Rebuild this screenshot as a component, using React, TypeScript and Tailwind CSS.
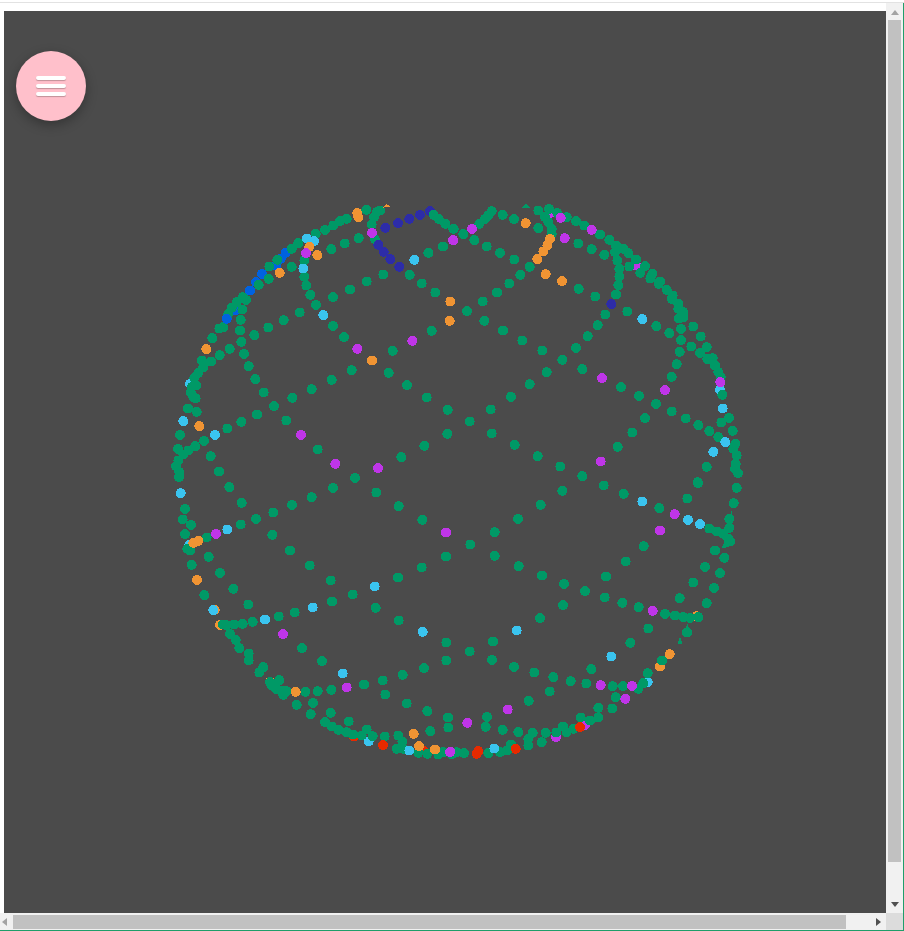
type Dot = [number, number, string?];

const fills: Record<string, string> = {
  g: "fill-[#009966]",
  o: "fill-[#f09433]",
  p: "fill-[#bf35e8]",
  c: "fill-[#3ac4ef]",
  n: "fill-[#2d2ca8]",
  b: "fill-[#0062e0]",
  r: "fill-[#e62a00]",
};

// sphere points, per quadrant, in 3x pixels from the quadrant origin
const quadrants: { ox: number; oy: number; under: Dot[]; green: Dot[]; over: Dot[] }[] = [
  {
    ox: 170,
    oy: 200,
    under: [
      [347, 157, "b"], [332, 175, "b"], [318, 195, "b"], [276, 220, "b"], [258, 245, "b"], [195, 330, "b"],
      [60, 550, "c"], [780, 32, "n"], [40, 662, "c"],
    ],
    green: [
      [589, 28], [620, 35], [630, 30], [605, 72], [612, 50], [490, 75], [510, 62], [530, 55], [465, 88], [437, 100],
      [385, 128], [365, 145], [322, 178], [298, 198], [266, 253], [296, 235], [365, 199], [403, 180], [403, 229],
      [409, 255], [421, 283], [438, 313], [489, 376], [522, 410], [484, 146], [524, 129], [566, 113], [614, 115],
      [590, 243], [640, 222], [540, 267], [489, 290], [389, 336], [341, 359], [295, 381], [253, 404], [214, 424],
      [222, 460], [236, 497], [256, 536], [281, 576], [312, 617], [349, 660], [179, 445], [149, 464], [123, 483],
      [95, 480], [100, 500], [85, 517], [73, 532], [78, 555], [65, 560], [62, 575], [70, 590], [77, 594], [54, 624],
      [80, 634], [30, 703], [102, 721], [76, 737], [55, 750], [40, 762], [24, 745], [25, 780], [18, 797], [28, 815],
      [27, 830], [122, 767], [147, 813], [172, 684], [214, 664], [261, 642], [367, 592], [425, 566], [485, 538],
      [545, 509], [668, 451], [785, 391], [819, 138], [775, 157], [719, 223], [755, 249], [796, 276], [791, 43],
      [806, 55], [826, 70], [851, 85], [656, 517], [711, 554], [770, 591], [833, 628], [832, 700], [763, 736],
      [694, 770], [443, 747], [555, 832], [127, 413], [148, 384], [160, 380], [175, 340], [185, 322], [200, 305],
      [218, 290], [228, 298], [217, 327], [212, 358], [210, 390],
    ],
    over: [
      [240, 270, "b"], [170, 355, "b"],
      [460, 344, "c"], [733, 178, "c"], [400, 204, "c"], [410, 114, "c"], [432, 122, "c"], [135, 703, "c"],
      [562, 38, "o"], [565, 50, "o"], [418, 139, "o"], [442, 164, "o"], [329, 217, "o"], [109, 446, "o"], [88, 677, "o"],
      [841, 303, "o"], [839, 361, "o"], [606, 480, "o"],
      [606, 97, "p"], [408, 158, "p"], [562, 445, "p"], [727, 421, "p"], [849, 119, "p"], [393, 703, "p"],
      [496, 790, "p"], [624, 803, "p"],
      [646, 82, "n"], [684, 68, "n"], [718, 55, "n"], [750, 43, "n"], [625, 133, "n"], [641, 154, "n"], [661, 176, "n"],
      [688, 199, "n"],
    ],
  },
  {
    ox: 450,
    oy: 200,
    under: [[300, 38, "p"], [558, 195, "p"], [810, 568, "c"]],
    green: [
      [125, 32], [115, 45], [105, 55], [88, 70], [158, 43], [192, 56], [265, 83], [40, 101], [73, 119], [10, 85],
      [110, 138], [150, 157], [193, 177], [239, 199], [211, 223], [178, 249], [141, 276], [98, 303], [51, 332],
      [103, 361], [159, 390], [217, 420], [277, 450], [337, 478], [378, 442], [413, 407], [443, 374], [466, 342],
      [498, 282], [505, 254], [508, 228], [508, 205], [502, 180], [495, 155], [463, 163], [425, 146], [385, 129],
      [265, 30], [297, 25], [285, 50], [295, 65], [305, 85], [305, 100], [322, 38], [350, 50], [378, 62], [403, 75],
      [450, 102], [478, 118], [498, 135], [520, 145], [535, 158], [558, 177], [585, 197], [538, 198], [571, 217],
      [607, 220], [601, 234], [630, 243], [626, 250], [650, 268], [668, 285], [665, 295], [685, 310], [685, 325],
      [700, 335], [700, 350], [687, 354], [693, 385], [693, 419], [689, 454], [680, 491], [665, 529], [730, 378],
      [752, 408], [770, 440], [724, 438], [750, 457], [788, 473], [772, 476], [795, 495], [805, 515], [812, 530],
      [817, 583], [532, 333], [619, 377], [658, 398], [436, 288], [386, 265], [290, 515], [397, 506], [239, 551],
      [183, 589], [122, 627], [59, 663], [125, 699], [194, 733], [263, 767], [331, 798], [397, 827], [513, 560],
      [567, 586], [618, 610], [585, 653], [547, 696], [503, 739], [665, 633], [707, 654], [745, 674], [778, 692],
      [805, 710], [814, 666], [837, 652], [848, 691], [856, 730], [850, 745], [860, 765], [857, 790], [855, 805],
      [864, 818], [770, 799], [743, 845],
    ],
    over: [
      [10, 119, "p"], [66, 85, "p"], [344, 113, "p"], [332, 52, "p"], [425, 88, "p"], [811, 545, "p"], [645, 569, "p"],
      [456, 533, "p"], [452, 783, "p"],
      [227, 68, "o"], [300, 115, "o"], [292, 135, "o"], [280, 153, "o"], [262, 176, "o"], [287, 221, "o"], [336, 242, "o"],
      [577, 356, "c"], [818, 624, "c"], [826, 725, "c"], [790, 754, "c"],
      [484, 311, "n"],
    ],
  },
  {
    ox: 170,
    oy: 480,
    under: [
      [150, 433, "o"], [134, 388, "o"], [300, 604, "o"], [552, 768, "r"], [596, 783, "c"], [760, 810, "r"], [58, 193, "c"],
    ],
    green: [
      [178, 20], [215, 67], [45, 85], [38, 117], [63, 133], [45, 161], [110, 171], [212, 132], [258, 115], [310, 96],
      [366, 73], [425, 50], [489, 22], [619, 36], [686, 77], [757, 118], [828, 228], [755, 261], [684, 291], [307, 163],
      [360, 210], [419, 255], [482, 300], [116, 229], [65, 253], [150, 277], [190, 325], [103, 344], [235, 372], [52, 205],
      [60, 210], [548, 342], [486, 363], [374, 396], [326, 408], [248, 424], [218, 430], [193, 432], [170, 434], [158, 432],
      [180, 460], [197, 478], [208, 503], [236, 519], [236, 540], [280, 560], [268, 576], [328, 599], [300, 605], [305, 615],
      [318, 625], [335, 630], [350, 632], [340, 643], [406, 634], [443, 632], [484, 628], [582, 612], [638, 600], [698, 583],
      [762, 563], [829, 540], [829, 486], [617, 382], [686, 420], [396, 503], [456, 542], [646, 642], [710, 669], [772, 692],
      [834, 711], [835, 741], [781, 752], [429, 667], [380, 673], [422, 701], [482, 697], [536, 723], [465, 725], [485, 738],
      [505, 748], [530, 755], [550, 762], [575, 765], [590, 747], [608, 767], [644, 768], [685, 765], [697, 783], [680, 805],
      [700, 805], [745, 817], [772, 820], [805, 822], [845, 822], [820, 815],
    ],
    over: [
      [32, 38, "c"], [172, 147, "c"], [130, 389, "c"], [285, 417, "c"], [428, 381, "c"], [614, 318, "c"], [758, 454, "c"],
      [518, 579, "c"], [718, 810, "c"],
      [138, 160, "p"], [339, 461, "p"], [530, 621, "p"], [828, 156, "p"], [841, 814, "p"],
      [85, 181, "o"], [70, 187, "o"], [81, 298, "o"], [377, 634, "o"], [731, 760, "o"], [747, 797, "o"], [795, 807, "o"],
      [639, 794, "r"],
    ],
  },
  {
    ox: 450,
    oy: 480,
    under: [
      [630, 558, "o"], [740, 407, "o"], [593, 605, "c"], [318, 770, "p"], [405, 733, "p"],
    ],
    green: [
      [337, 31], [461, 15], [521, 40], [628, 83], [712, 54], [744, 8], [860, 22], [851, 68], [838, 115], [838, 142],
      [778, 144], [800, 153], [820, 160], [835, 175], [840, 183], [823, 232], [795, 210], [765, 259], [810, 278], [792, 322],
      [730, 306], [770, 368], [689, 353], [645, 400], [675, 405], [700, 410], [720, 412], [745, 410], [595, 444], [711, 456],
      [541, 487], [636, 540], [593, 578], [580, 608], [565, 625], [424, 566], [497, 650], [487, 684], [445, 682], [445, 711],
      [392, 711], [420, 720], [370, 745], [350, 755], [339, 738], [319, 756], [287, 757], [275, 785], [248, 757], [235, 775],
      [235, 795], [205, 755], [183, 792], [158, 748], [172, 810], [150, 815], [115, 818], [107, 739], [111, 709], [42, 818],
      [20, 815], [204, 115], [272, 73], [134, 155], [61, 192], [134, 226], [206, 257], [276, 285], [342, 310], [405, 332],
      [464, 351], [517, 367], [566, 380], [468, 288], [527, 243], [581, 197], [339, 374], [270, 413], [129, 483], [59, 513],
      [126, 538], [192, 559], [253, 576], [310, 590], [362, 602], [409, 609], [488, 617], [519, 617], [299, 633], [236, 661],
    ],
    over: [
      [577, 63, "c"], [714, 118, "c"], [750, 131, "c"], [200, 450, "c"], [484, 528, "c"], [133, 804, "c"],
      [674, 101, "p"], [630, 150, "p"], [608, 391, "p"], [452, 614, "p"], [546, 616, "p"], [526, 655, "p"], [173, 687, "p"],
      [52, 727, "p"], [0, 815, "p"],
      [659, 521, "o"],
      [390, 740, "r"], [85, 812, "r"], [80, 820, "r"], [197, 805, "r"],
    ],
  },
];

function layer(name: "under" | "green" | "over") {
  return quadrants.flatMap((q) =>
    q[name].map(([x, y, c], i) => (
      <circle
        key={`${q.ox}-${q.oy}-${name}-${i}`}
        cx={q.ox + x / 3}
        cy={q.oy + y / 3}
        r={5}
        className={fills[c ?? "g"]}
      />
    ))
  );
}

export default function App() {
  return (
    <div className="flex h-[931px] w-[904px] flex-col overflow-hidden bg-white">
      <div className="mt-[2px] h-px bg-[#e2e2e2]" />
      <div className="flex min-h-0 flex-1">
        <div className="flex min-w-0 flex-1 flex-col pt-2 pl-1">
          <div className="relative flex-1 bg-[#4b4b4b]">
            <svg viewBox="0 0 882 901" shapeRendering="crispEdges" className="absolute inset-0 h-full w-full">
              <g transform="translate(-4 -11)">
                {layer("under")}
                {layer("green")}
                {/* clipped slivers at the rim of the sphere */}
                <polygon points="521.7,207 526,203.5 530.3,207" className="fill-[#009966]" />
                <polygon points="383.5,207 386.7,203.5 391,206.7" className="fill-[#f09433]" />
                <polygon points="731.7,510 733.3,519 729,519" className="fill-[#009966]" />
                <polygon points="687.3,623.5 690,630 684.7,630" className="fill-[#009966]" />
                <polygon points="680,636 682.3,643.5 677.7,643.5" className="fill-[#009966]" />
                <polygon points="721.7,547.7 728.3,546.7 734.3,541.7 726.7,535" className="fill-[#009966]" />
                {layer("over")}
              </g>
            </svg>
            <button className="absolute top-10 left-3 flex h-[70px] w-[70px] flex-col items-center justify-center gap-1 rounded-full bg-[#ffc0cb] shadow-[0_4px_12px_rgba(0,0,0,0.3)]">
              <span className="h-1 w-[30px] rounded-full bg-white shadow-[0_1px_1px_rgba(0,0,0,0.25)]" />
              <span className="h-1 w-[30px] rounded-full bg-white shadow-[0_1px_1px_rgba(0,0,0,0.25)]" />
              <span className="h-1 w-[30px] rounded-full bg-white shadow-[0_1px_1px_rgba(0,0,0,0.25)]" />
            </button>
          </div>
        </div>
        {/* vertical scrollbar */}
        <div className="flex w-[17px] flex-col items-center bg-[#f1f1f1]">
          <svg width="8" height="5" viewBox="0 0 8 5" className="mt-[7px] shrink-0">
            <polygon points="4,0 8,5 0,5" className="fill-[#a3a3a3]" />
          </svg>
          <div className="mt-[5px] h-[842px] w-[13px] shrink-0 bg-[#c1c1c1]" />
          <svg width="8" height="5" viewBox="0 0 8 5" className="mt-[40px] shrink-0">
            <polygon points="0,0 8,0 4,5" className="fill-[#505050]" />
          </svg>
        </div>
        <div className="w-px bg-[#1f9e6a]" />
      </div>
      {/* horizontal scrollbar */}
      <div className="flex h-[17px] shrink-0">
        <div className="flex w-[886px] items-center bg-[#f1f1f1]">
          <svg width="5" height="8" viewBox="0 0 5 8" className="ml-[2px] shrink-0">
            <polygon points="5,0 5,8 0,4" className="fill-[#a3a3a3]" />
          </svg>
          <div className="ml-[6px] h-[14px] w-[833px] shrink-0 bg-[#c1c1c1]" />
          <svg width="5" height="8" viewBox="0 0 5 8" className="ml-[30px] shrink-0">
            <polygon points="0,0 5,4 0,8" className="fill-[#505050]" />
          </svg>
        </div>
        <div className="w-[17px] bg-[#dcdcdc]" />
        <div className="w-px bg-[#1f9e6a]" />
      </div>
      <div className="h-px bg-[#1f9e6a]" />
    </div>
  );
}
